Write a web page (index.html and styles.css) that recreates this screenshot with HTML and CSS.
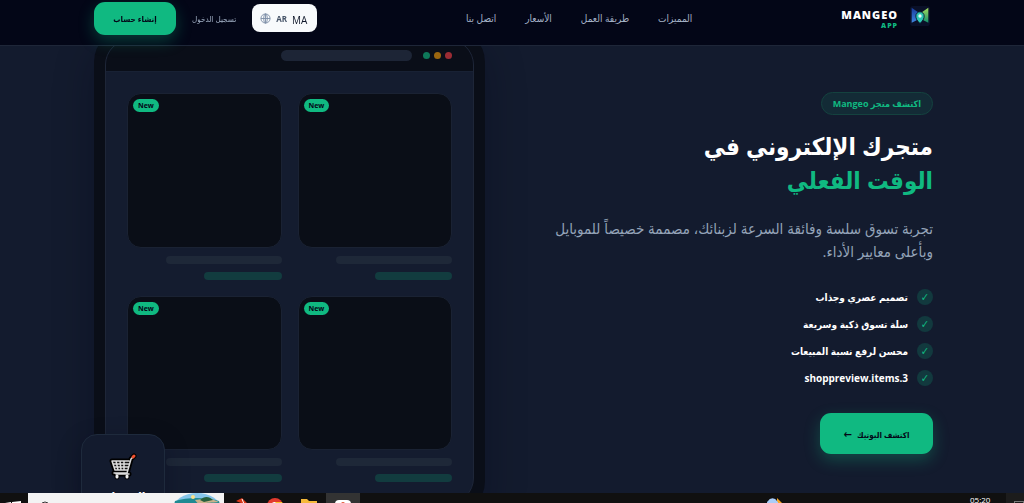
FILE: index.html
```html
<!DOCTYPE html>
<html lang="ar" dir="rtl">
<head>
    <meta charset="UTF-8">
    <meta name="viewport" content="width=device-width, initial-scale=1.0">
    <title>Mangeo App</title>
    <link rel="stylesheet" href="styles.css">
</head>
<body>

<header class="header">
    <a href="#" class="brand">
        <svg class="brand-icon" viewBox="0 0 24 24" aria-hidden="true">
            <defs>
                <linearGradient id="blueLeg" x1="0" y1="0" x2="0" y2="1">
                    <stop offset="0" stop-color="#173a9c"/>
                    <stop offset="1" stop-color="#3f86e0"/>
                </linearGradient>
                <linearGradient id="greenLeg" x1="0" y1="0" x2="0" y2="1">
                    <stop offset="0" stop-color="#a4dc5c"/>
                    <stop offset="1" stop-color="#128f6c"/>
                </linearGradient>
            </defs>
            <rect width="24" height="24" rx="4" fill="#0a1028"/>
            <path d="M2 2l10 7-4 5v3l-6 3z" fill="url(#blueLeg)"/>
            <path d="M22 2l-10 7 4 5v3l6 3z" fill="url(#greenLeg)"/>
            <path d="M12 21c-4-4-5-6-5-9a5 5 0 0 1 10 0c0 3-1 5-5 9z" fill="#2cc5b4" stroke="#0a1028"/>
            <circle cx="12" cy="12" r="2" fill="#e8fbf8"/>
        </svg>
        <span class="brand-name" dir="ltr">MANGEO<span>APP</span></span>
    </a>

    <nav class="nav">
        <a href="#features">المميزات</a>
        <a href="#how">طريقة العمل</a>
        <a href="#pricing">الأسعار</a>
        <a href="#contact">اتصل بنا</a>
    </nav>

    <div class="actions">
        <button class="lang-btn" type="button" dir="ltr">
            <svg viewBox="0 0 24 24" fill="none" stroke="#7c8da6" stroke-width="2" aria-hidden="true">
                <circle cx="12" cy="12" r="10"/>
                <ellipse cx="12" cy="12" rx="4" ry="10"/>
                <path d="M12 2v20M2 12h20"/>
            </svg>
            <span class="lang-code">AR</span>
            <span class="lang-region">MA</span>
        </button>
        <a href="#login" class="login">تسجيل الدخول</a>
        <button class="btn signup-btn" type="button">إنشاء حساب</button>
    </div>
</header>

<main class="hero">
    <section class="intro">
        <span class="tag">اكتشف متجر Mangeo</span>
        <h1>متجرك الإلكتروني في <span>الوقت الفعلي</span></h1>
        <p>تجربة تسوق سلسة وفائقة السرعة لزبنائك، مصممة خصيصاً للموبايل وبأعلى معايير الأداء.</p>
        <ul class="features">
            <li><span class="check">✓</span>تصميم عصري وجذاب</li>
            <li><span class="check">✓</span>سلة تسوق ذكية وسريعة</li>
            <li><span class="check">✓</span>محسن لرفع نسبة المبيعات</li>
            <li><span class="check">✓</span><bdi>shoppreview.items.3</bdi></li>
        </ul>
        <button class="btn shop-btn" type="button">اكتشف البوتيك <span>←</span></button>
    </section>

    <section class="preview">
        <div class="device">
            <div class="screen">
                <div class="device-bar">
                    <span class="dot red"></span>
                    <span class="dot amber"></span>
                    <span class="dot green"></span>
                    <span class="address"></span>
                </div>
                <div class="products">
                    <div class="product">
                        <div class="thumb"><span class="new">New</span></div>
                        <div class="line"></div>
                        <div class="line price"></div>
                    </div>
                    <div class="product">
                        <div class="thumb"><span class="new">New</span></div>
                        <div class="line"></div>
                        <div class="line price"></div>
                    </div>
                    <div class="product">
                        <div class="thumb"><span class="new">New</span></div>
                        <div class="line"></div>
                        <div class="line price"></div>
                    </div>
                    <div class="product">
                        <div class="thumb"><span class="new">New</span></div>
                        <div class="line"></div>
                        <div class="line price"></div>
                    </div>
                </div>
            </div>
        </div>
        <div class="sales-card">
            <svg viewBox="0 0 28 28" fill="none" stroke-linecap="round" stroke-linejoin="round" aria-hidden="true">
                <g stroke="#000" stroke-width="5">
                    <path d="M25 3l-3 3-4 14H5M20 8H3l3 9h13M7 21h13"/>
                    <path d="M8 23v1M18 23v1"/>
                </g>
                <path d="M3 8h17l-2 9H6z" fill="#111"/>
                <path d="M25 3l-3 3-4 14H5M20 8H3l3 9h13M4 11h16M5 14h14M7 8l2 9M11 8l1 9M15 8v9M7 21h13" stroke="#dcdcdc" stroke-width="1.5"/>
                <path d="M8 23v1M18 23v1" stroke="#eee" stroke-width="3"/>
                <path d="M24 4l1-1" stroke="#f0502f" stroke-width="3"/>
            </svg>
            <strong>المبيعات</strong>
        </div>
    </section>
</main>

<footer class="taskbar" dir="ltr">
    <span class="start">
        <svg viewBox="0 0 16 16" fill="#fff" aria-hidden="true">
            <path d="M0 2l6-1v6H0zM7 1l9-1v7H7zM0 8h6v6l-6-1zM7 8h9v8l-9-1z"/>
        </svg>
    </span>
    <div class="search">
        <svg class="glass" viewBox="0 0 12 12" fill="none" stroke="#333" aria-hidden="true">
            <circle cx="7" cy="5" r="4"/><path d="M4 8l-3 3"/>
        </svg>
        <span>Type here to search</span>
        <svg class="beach" viewBox="0 0 48 32" aria-hidden="true">
            <ellipse cx="24" cy="16" rx="24" ry="16" fill="#86c5ea"/>
            <path d="M2 8c12-4 32-4 44 0l2 8H0z" fill="#1f8a92"/>
            <path d="M22 7c7 0 9-3 14-2l10 4c-8 1-12 0-16 2S24 9 22 7z" fill="#c9b28a"/>
            <path d="M27 7c4-4 9-4 13 0l-9 2z" fill="#27603d"/>
            <circle cx="20" cy="4" r="2" fill="#f8e08a"/>
        </svg>
    </div>
    <span class="app">
        <svg viewBox="0 0 16 16" aria-hidden="true">
            <path d="M3 3l6-3 5 5-1 9-5-9z" fill="#d9391b"/><path d="M9 1l2 5" stroke="#fff"/>
        </svg>
    </span>
    <span class="app">
        <svg viewBox="0 0 16 16" aria-hidden="true">
            <circle cx="8" cy="8" r="8" fill="#e23a2e"/><circle cx="8" cy="8" r="4" fill="#fff"/>
            <path d="M8 16a8 8 0 0 0 7-12H8l4 5z" fill="#f8c52c"/><circle cx="8" cy="8" r="3" fill="#3b7de9"/>
        </svg>
    </span>
    <span class="app">
        <svg viewBox="0 0 16 16" aria-hidden="true">
            <path d="M0 1h6l2 2h8v12H0z" fill="#f5b93a"/><path d="M0 6h16v9H0z" fill="#fbdc7c"/>
        </svg>
    </span>
    <span class="app active">
        <svg viewBox="0 0 16 16" aria-hidden="true">
            <rect width="16" height="16" rx="4" fill="#fff"/><circle cx="8" cy="4" r="2" fill="#e2502e"/>
        </svg>
    </span>
    <span class="weather">
        <svg viewBox="0 0 16 16" aria-hidden="true">
            <path d="M10 4l5 5v7h-5z" fill="#f6a623"/><path d="M1 13a4 4 0 0 1 0-6 5 5 0 0 1 9 0 4 4 0 0 1 0 6z" fill="#a9cdf8"/>
        </svg>
    </span>
    <span class="clock">05:20</span>
    <span class="notes"><i></i></span>
</footer>

</body>
</html>
```

FILE: styles.css
```css
* {
    box-sizing: border-box;
}
body {
    margin: 0;
    height: 100vh;
    overflow: hidden;
    font-family: 'Open Sans', 'DejaVu Sans Condensed', 'DejaVu Sans', sans-serif;
    background-color: #131b2e;
    color: white;
}
a {
    color: inherit;
    text-decoration: none;
}
button {
    font-family: inherit;
    border: none;
    cursor: pointer;
}

/* top bar */
.header {
    position: fixed;
    top: 0;
    left: 0;
    right: 0;
    z-index: 5;
    display: flex;
    justify-content: space-between;
    align-items: center;
    height: 46px;
    padding: 0 91px 9px 94px;
    background-color: #030617;
    border-bottom: 1px solid #1e2638;
}
.brand {
    display: flex;
    align-items: center;
    gap: 12px;
    padding-right: 3px;
}
.brand-icon {
    width: 20px;
    height: 20px;
    margin-bottom: 4px;
}
.brand-name {
    padding-top: 4px;
    font-size: 11px;
    font-weight: 800;
    line-height: 12px;
    letter-spacing: 1px;
    text-align: right;
}
.brand-name span {
    display: block;
    font-size: 7px;
    line-height: 10px;
    color: #10b981;
}
.nav {
    display: flex;
    gap: 29px;
    font-size: 10px;
    font-weight: 500;
    color: #a3b1c6;
}
.actions {
    display: flex;
    align-items: center;
    gap: 16px;
}
.lang-btn {
    display: flex;
    align-items: center;
    gap: 5px;
    width: 65px;
    height: 28px;
    padding: 0 8px;
    border-radius: 8px;
    background-color: #f8fafc;
}
.lang-btn svg {
    width: 11px;
    height: 11px;
}
.lang-code {
    font-size: 8px;
    font-weight: 700;
    color: #475569;
}
.lang-region {
    padding-top: 3px;
    font-size: 10px;
    color: #0f172a;
}
.login {
    font-size: 8px;
    font-weight: 500;
    color: #a3b1c6;
}
.btn {
    background-color: #10b981;
    color: #030617;
    font-weight: 700;
    font-size: 8px;
    border-radius: 11px;
    box-shadow: 0 6px 16px rgba(16, 185, 129, 0.3);
}
.signup-btn {
    width: 82px;
    height: 33px;
}

/* hero */
.hero {
    display: grid;
    grid-template-columns: 1fr 1fr;
    align-items: center;
    gap: 57px;
    padding: 28px 91px 0 94px;
}
.tag {
    display: inline-block;
    padding: 0 11px;
    border: 1px solid #14423f;
    border-radius: 12px;
    background-color: #132b36;
    color: #10b981;
    font-size: 9px;
    font-weight: 700;
    line-height: 21px;
}
.intro h1 {
    margin: 14px 0 20px;
    font-size: 24px;
    line-height: 34px;
}
.intro h1 span {
    display: block;
    color: #10b981;
}
.intro p {
    margin: 0 0 26px;
    font-size: 15px;
    line-height: 23px;
    color: #94a3b8;
}
.features {
    display: grid;
    gap: 11px;
    margin: 0 0 27px;
    padding: 0;
    list-style: none;
    font-size: 10px;
    font-weight: 700;
    line-height: 16px;
}
.features li {
    display: flex;
    gap: 9px;
}
.check {
    width: 16px;
    height: 16px;
    border-radius: 50%;
    background-color: #12393e;
    color: #10b981;
    font-size: 11px;
    text-align: center;
}
.shop-btn {
    width: 113px;
    height: 41px;
}
.shop-btn span {
    margin-right: 3px;
    font-size: 11px;
}

/* shop preview */
.preview {
    position: relative;
}
.device {
    padding: 11px;
    border-radius: 34px;
    background-color: #0a0e18;
    box-shadow: 0 16px 40px rgba(3, 6, 23, 0.3);
}
.screen {
    overflow: hidden;
    border: 1px solid #1e2638;
    border-radius: 26px;
    background-color: #141c2f;
}
.device-bar {
    display: flex;
    align-items: center;
    gap: 4px;
    height: 32px;
    padding: 0 21px;
    background-color: #0a0e18;
    border-bottom: 1px solid #182134;
}
.dot {
    width: 7px;
    height: 7px;
    border-radius: 50%;
}
.red {
    background-color: #9b2c34;
}
.amber {
    background-color: #9b660f;
}
.green {
    background-color: #0e7859;
}
.address {
    width: 131px;
    height: 11px;
    margin-right: 7px;
    border-radius: 6px;
    background-color: #1d2536;
}
.products {
    display: grid;
    grid-template-columns: 1fr 1fr;
    gap: 16px;
    padding: 21px;
}
.product {
    display: grid;
    gap: 8px;
}
.thumb {
    position: relative;
    aspect-ratio: 1;
    border: 1px solid #1a2233;
    border-radius: 14px;
    background-color: #0a0e17;
}
.new {
    position: absolute;
    top: 5px;
    left: 5px;
    padding: 0 5px;
    border-radius: 7px;
    background-color: #10b981;
    color: #030617;
    font-size: 7px;
    font-weight: 700;
    line-height: 13px;
}
.line {
    width: 75%;
    height: 8px;
    border-radius: 4px;
    background-color: #1e2838;
}
.price {
    width: 50%;
    background-color: #123c3f;
}
.sales-card {
    position: absolute;
    left: -13px;
    bottom: -13px;
    display: flex;
    flex-direction: column;
    align-items: center;
    width: 84px;
    height: 94px;
    padding-top: 18px;
    border: 1px solid #1e2a3c;
    border-radius: 16px;
    background-color: #131b2e;
    box-shadow: 0 8px 24px rgba(3, 6, 23, 0.3);
    font-size: 12px;
}
.sales-card svg {
    width: 28px;
    height: 28px;
    margin-bottom: 7px;
}

/* taskbar, only its top edge is on screen */
.taskbar {
    position: fixed;
    left: 0;
    right: 0;
    bottom: -30px;
    z-index: 6;
    display: flex;
    height: 40px;
    background-color: #101010;
    font-size: 11px;
    line-height: 14px;
}
.taskbar svg {
    width: 16px;
    height: 16px;
}
.start {
    width: 28px;
    padding: 8px 0 0 5px;
}
.search {
    display: flex;
    width: 196px;
    padding-left: 10px;
    background-color: #f3f3f3;
    color: #555;
}
.search .glass {
    width: 12px;
    height: 12px;
    margin-top: 8px;
}
.search span {
    width: 123px;
    padding: 7px 0 0 4px;
}
.search .beach {
    width: 48px;
    height: 32px;
}
.app {
    width: 34px;
    padding: 5px 0 0 9px;
}
.active {
    background-color: #333;
    padding-top: 7px;
}
.weather {
    margin-left: auto;
    padding-top: 1px;
}
.clock {
    margin-left: 187px;
    width: 36px;
    font-size: 8px;
    line-height: 13px;
}
.notes {
    width: 18px;
    padding: 8px 0 0 8px;
    background-color: #1c1c1c;
}
.notes i {
    display: block;
    height: 14px;
    border: 1px solid #777;
}
```
